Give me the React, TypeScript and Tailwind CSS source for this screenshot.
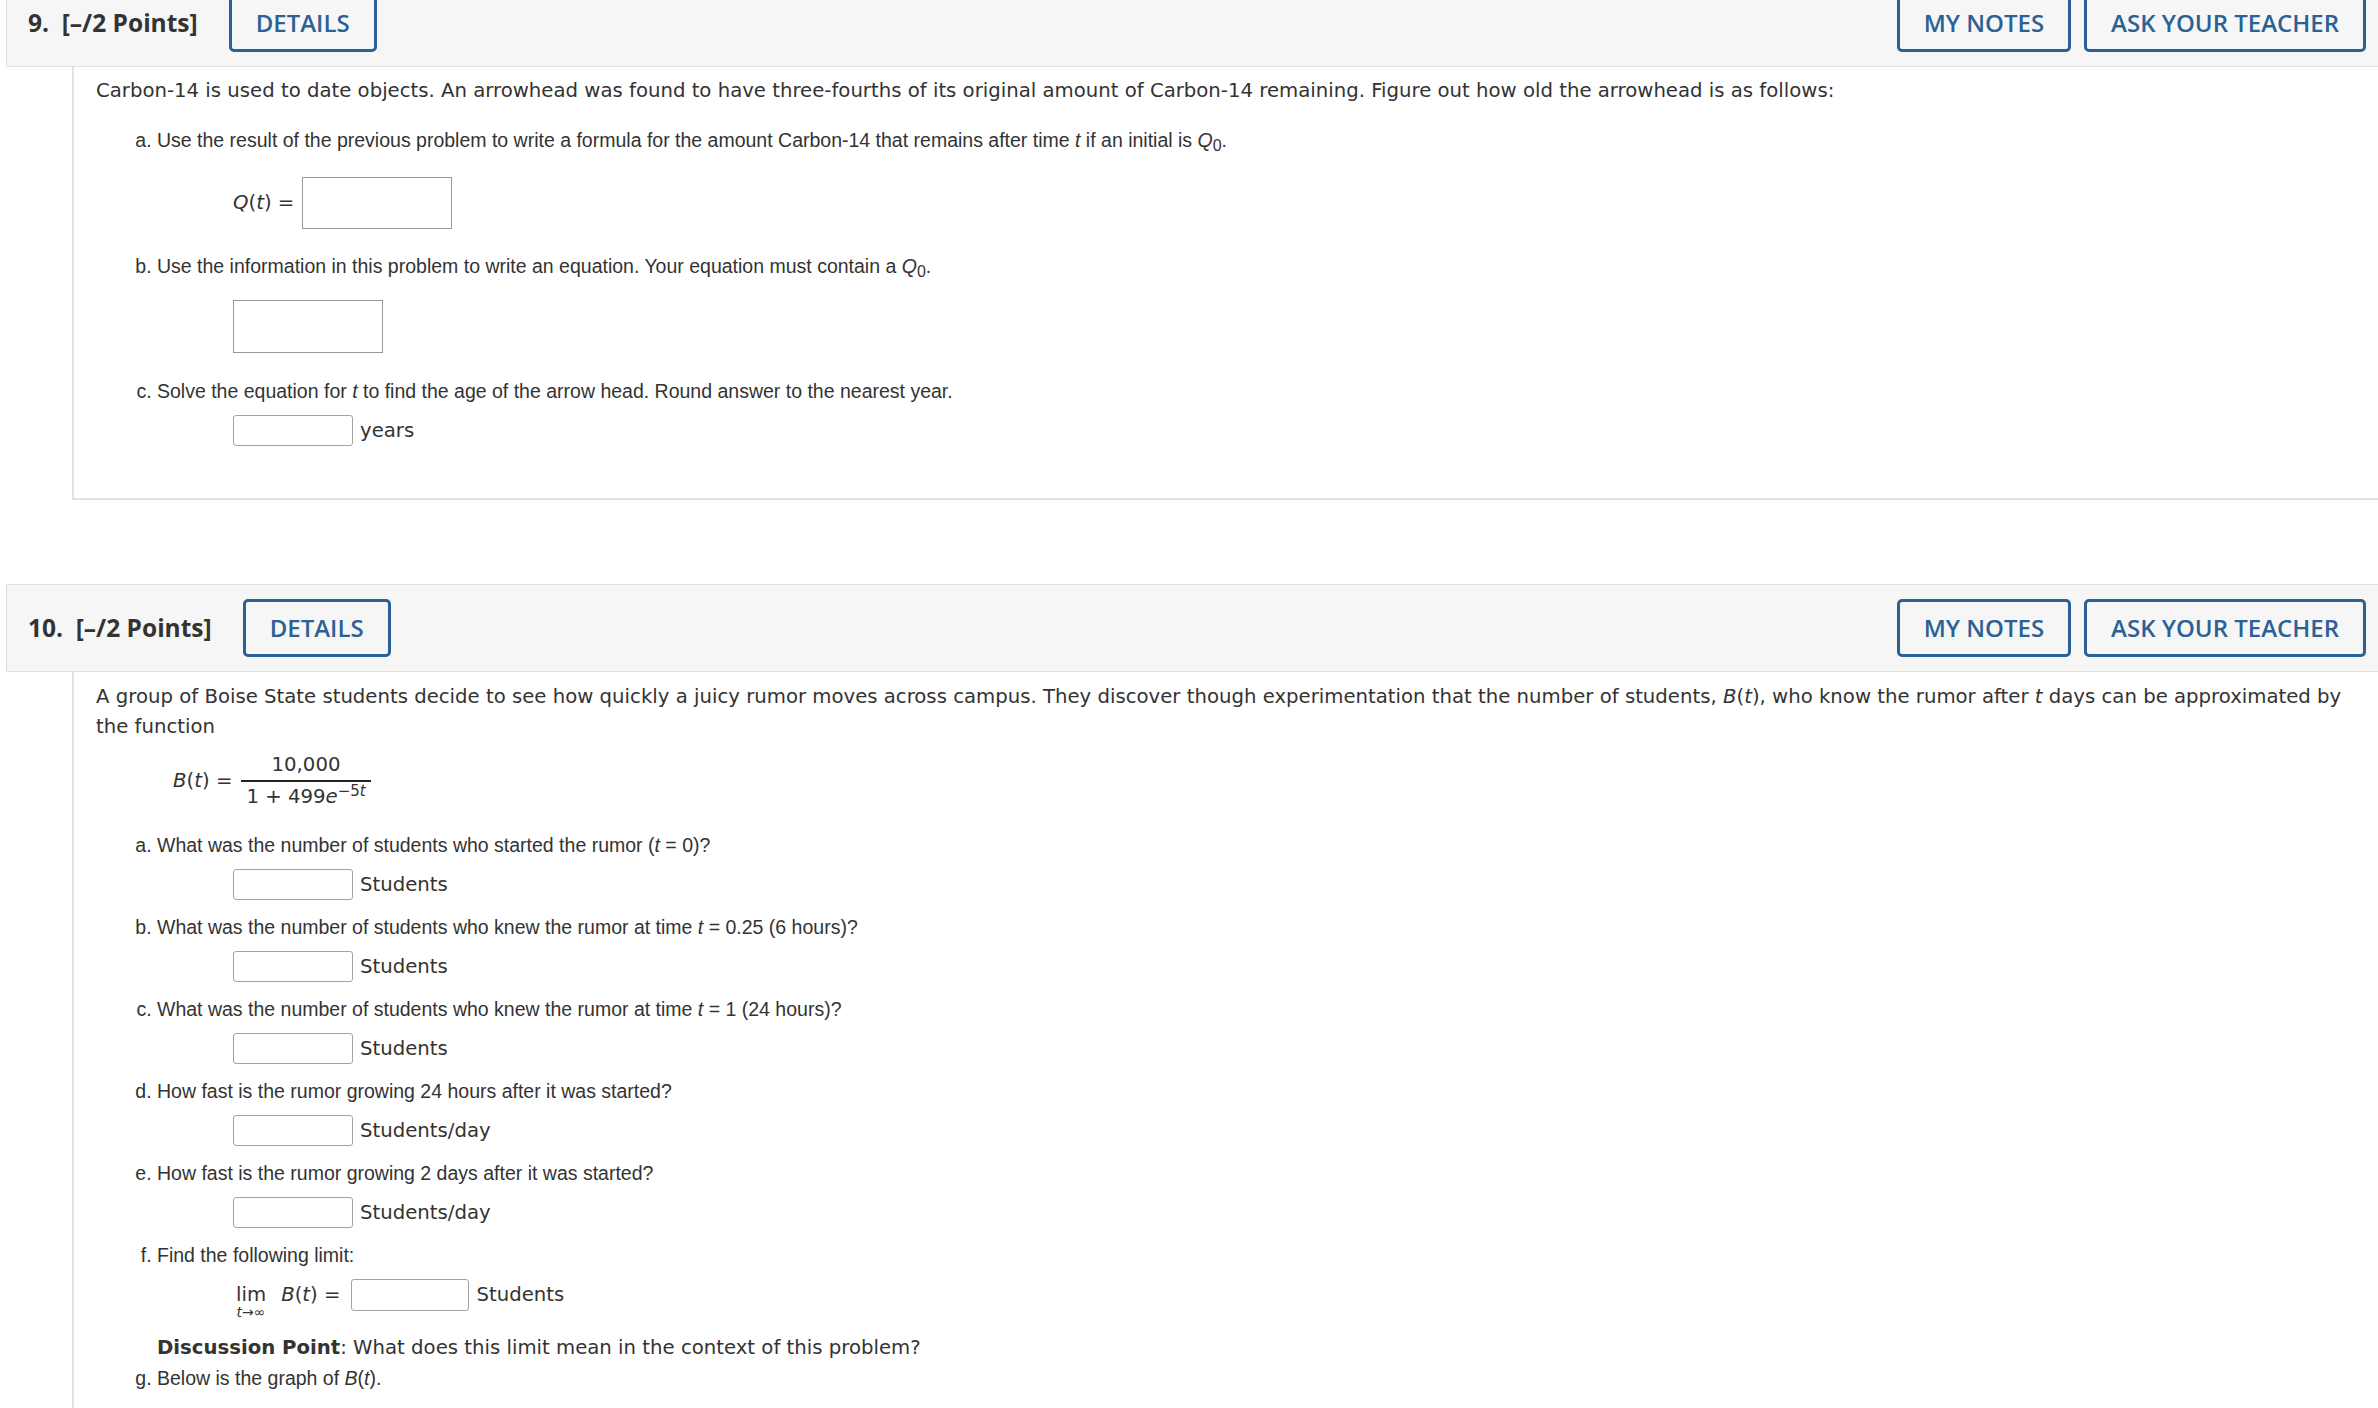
import React from "react";

const BTN =
  "h-[58px] rounded-[5px] border-[3px] border-[#2b6195] bg-transparent px-[24px] text-[24px] font-semibold leading-none text-[#2b6195] font-['Open_Sans',sans-serif]";

function Header({ num, className = "" }: { num: string; className?: string }) {
  return (
    <div
      className={
        "ml-[6px] flex items-center border border-r-0 border-[#dfdfdf] bg-[#f6f6f6] py-[14px] pl-[21px] pr-[12px] " +
        className
      }
    >
      <div className="whitespace-pre text-[24.5px] font-bold leading-none text-[#333] font-['Open_Sans',sans-serif]">
        {num + ".\u00a0 [–/2 Points]"}
      </div>
      <button className={BTN + " ml-[31px]"}>DETAILS</button>
      <div className="ml-auto flex gap-[13px]">
        <button className={BTN}>MY NOTES</button>
        <button className={BTN}>ASK YOUR TEACHER</button>
      </div>
    </div>
  );
}

function SmallInput({ unit }: { unit: string }) {
  return (
    <div className="mt-[9px] ml-[76px] flex items-center">
      <div className="h-[31px] w-[120px] rounded-[3px] border border-[#a3a3a3] bg-white" />
      <span className="ml-[7px] text-[19.7px] leading-[30px] font-['DejaVu_Sans',sans-serif]">{unit}</span>
    </div>
  );
}

const V = "font-['DejaVu_Sans',sans-serif]";

export default function App() {
  return (
    <div className="h-[1408px] w-full overflow-hidden bg-white text-[#333]">
      <div className="-mt-[21px]">
        {/* Question 9 */}
        <Header num="9" />
        <div className="ml-[72px] border-b-2 border-l-2 border-[#e2e2e2] pb-[52px] pl-[22px] pt-[9px]">
          <p className={"text-[19.7px] leading-[30px] " + V}>
            Carbon-14 is used to date objects. An arrowhead was found to have three-fourths of its original amount of
            Carbon-14 remaining. Figure out how old the arrowhead is as follows:
          </p>
          <ol className="mt-[19px] list-[lower-alpha] pl-[61px] text-[19.5px] leading-[30px] font-['Liberation_Sans',Arial,sans-serif]">
            <li>
              Use the result of the previous problem to write a formula for the amount Carbon-14 that remains after time{" "}
              <i>t</i> if an initial is <i>Q</i>
              <sub className="text-[16px]">0</sub>.
              <div className="mt-[22px] ml-[76px] flex items-center">
                <span className={"text-[19.7px] leading-[30px] " + V}>
                  <i>Q</i>(<i>t</i>) =
                </span>
                <div className="ml-[8px] h-[52px] w-[150px] border border-[#999] bg-white" />
              </div>
            </li>
            <li className="mt-[22px]">
              Use the information in this problem to write an equation. Your equation must contain a <i>Q</i>
              <sub className="text-[16px]">0</sub>.
              <div className="mt-[19px] ml-[76px] h-[53px] w-[150px] border border-[#999] bg-white" />
            </li>
            <li className="mt-[23px]">
              Solve the equation for <i>t</i> to find the age of the arrow head. Round answer to the nearest year.
              <SmallInput unit="years" />
            </li>
          </ol>
        </div>

        {/* Question 10 */}
        <Header num="10" className="mt-[84px]" />
        <div className="ml-[72px] border-l-2 border-[#e2e2e2] pb-[200px] pl-[22px] pt-[10px]">
          <p className={"text-[19.7px] leading-[30px] " + V}>
            A group of Boise State students decide to see how quickly a juicy rumor moves across campus. They discover
            though experimentation that the number of students, <i>B</i>(<i>t</i>), who know the rumor after <i>t</i>{" "}
            days can be approximated by
            <br />
            the function
          </p>
          <div className={"mt-[11px] ml-[77px] flex items-center text-[19.7px] " + V}>
            <span className="leading-[30px]">
              <i>B</i>(<i>t</i>) =
            </span>
            <div className="ml-[9px] flex flex-col items-stretch">
              <div className="px-[5px] pb-[3px] text-center leading-[24px]">10,000</div>
              <div className="h-[2px] bg-[#222]" />
              <div className="px-[5px] pt-[3px] text-center leading-[24px]">
                1 + 499<i>e</i>
                <sup className="text-[15px]">
                  −5<i>t</i>
                </sup>
              </div>
            </div>
          </div>
          <ol className="mt-[21px] list-[lower-alpha] pl-[61px] text-[19.5px] leading-[30px] font-['Liberation_Sans',Arial,sans-serif]">
            <li>
              What was the number of students who started the rumor (<i>t</i> = 0)?
              <SmallInput unit="Students" />
            </li>
            <li className="mt-[12px]">
              What was the number of students who knew the rumor at time <i>t</i> = 0.25 (6 hours)?
              <SmallInput unit="Students" />
            </li>
            <li className="mt-[12px]">
              What was the number of students who knew the rumor at time <i>t</i> = 1 (24 hours)?
              <SmallInput unit="Students" />
            </li>
            <li className="mt-[12px]">
              How fast is the rumor growing 24 hours after it was started?
              <SmallInput unit="Students/day" />
            </li>
            <li className="mt-[12px]">
              How fast is the rumor growing 2 days after it was started?
              <SmallInput unit="Students/day" />
            </li>
            <li className="mt-[12px]">
              Find the following limit:
              <div className={"mt-[9px] ml-[79px] flex items-start text-[19.7px] " + V}>
                <div className="flex flex-col items-center">
                  <span className="leading-[32px]">lim</span>
                  <span className="-mt-[5px] text-[14px] leading-[13px]">
                    <i>t</i>→∞
                  </span>
                </div>
                <span className="ml-[15px] leading-[32px]">
                  <i>B</i>(<i>t</i>) =
                </span>
                <div className="ml-[10px] h-[32px] w-[118px] rounded-[3px] border border-[#a3a3a3] bg-white" />
                <span className="ml-[8px] leading-[32px]">Students</span>
              </div>
              <p className={"mt-[14px] text-[19.7px] leading-[30px] " + V}>
                <b>Discussion Point</b>: What does this limit mean in the context of this problem?
              </p>
            </li>
            <li>
              Below is the graph of <i>B</i>(<i>t</i>).
            </li>
          </ol>
        </div>
      </div>
    </div>
  );
}
